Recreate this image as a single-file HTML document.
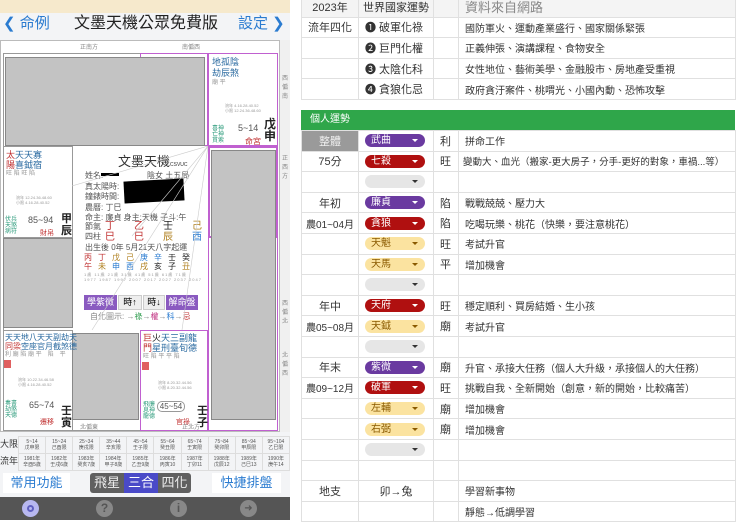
<!DOCTYPE html>
<html><head><meta charset="utf-8"><style>
*{margin:0;padding:0;box-sizing:border-box}
body{width:739px;height:520px;overflow:hidden;background:#fff;font-family:"Liberation Sans","Noto Sans CJK TC",sans-serif;position:relative}
.a{position:absolute}
.g{position:absolute;background:#c3c3c3;border:1px solid #888}
.t{font-size:8px;line-height:9px;position:absolute}
table{border-collapse:collapse;position:absolute;table-layout:fixed}
.rt td{border:1px solid #e0e0e0;font-size:11px;color:#333;height:20.6px;padding:0 6px;white-space:nowrap;overflow:hidden}
.pill{display:inline-block;width:60px;height:13px;border-radius:7px;font-size:10px;line-height:13px;padding-left:6px;position:relative;vertical-align:middle}
.pill:after{content:"";position:absolute;right:7px;top:5px;border:3px solid transparent;border-top:3px solid currentColor}
.pu{background:#6a3aa0;color:#fff}.rd{background:#b01010;color:#fff}.ye{background:#fbe3a0;color:#8a5a00}.em{background:#e6e6e6;color:#333}
#bt td{border:1px solid #ddd;font-size:5px;line-height:6px;text-align:center;color:#555;height:17px;overflow:hidden;white-space:nowrap;padding:0}
</style></head><body>
<div class="a" style="left:0;top:0;width:290px;height:520px;background:#f3f4f6"></div>
<div class="a" style="left:0;top:0;width:290px;height:13px;background:#f6e9cc"></div>
<div class="a" style="left:3px;top:13px;font-size:15px;color:#2a7bd0;line-height:22px">❮ 命例</div>
<div class="a" style="left:74px;top:12px;font-size:16px;color:#222;line-height:24px">文墨天機公眾免費版</div>
<div class="a" style="left:238px;top:13px;font-size:15px;color:#2a7bd0;line-height:22px">設定 ❯</div>
<div class="a" style="left:0;top:40px;width:280px;height:392px;background:#fff;border:1px solid #bbb"></div>
<div class="a" style="left:280px;top:40px;width:10px;height:392px;background:#f0f0f0"></div>
<div class="t" style="left:80px;top:44px;color:#888;font-size:6px">正南方</div>
<div class="t" style="left:182px;top:44px;color:#888;font-size:6px">南偏西</div>
<div class="t" style="left:282px;top:75px;color:#888;font-size:6px;width:6px">西偏南</div>
<div class="t" style="left:282px;top:155px;color:#888;font-size:6px;width:6px">正西方</div>
<div class="t" style="left:282px;top:300px;color:#888;font-size:6px;width:6px">西偏北</div>
<div class="t" style="left:282px;top:352px;color:#888;font-size:6px;width:6px">北偏西</div>
<div class="a" style="left:3px;top:53px;width:275px;height:378px;border:1px solid #999"></div>
<div class="a" style="left:140px;top:53px;width:68px;height:93px;border:1px solid #c060d0"></div>
<div class="a" style="left:208px;top:53px;width:70px;height:93px;border:1px solid #c060d0;background:#fff"></div>
<div class="a" style="left:208px;top:146px;width:70px;height:92px;border:2px solid #c060d0"></div>
<div class="a" style="left:208px;top:146px;width:70px;height:285px;border:1px solid #c060d0"></div>
<div class="a" style="left:140px;top:330px;width:68px;height:101px;border:1px solid #c060d0"></div>
<div class="a" style="left:3px;top:146px;width:70px;height:92px;border:1px solid #999"></div>
<div class="a" style="left:3px;top:330px;width:70px;height:101px;border:1px solid #999"></div>
<div class="g" style="left:5px;top:57px;width:200px;height:89px"></div>
<div class="g" style="left:211px;top:150px;width:65px;height:270px"></div>
<div class="g" style="left:3px;top:238px;width:70px;height:90px"></div>
<div class="g" style="left:72px;top:333px;width:67px;height:87px"></div>
<div class="t" style="left:212px;top:57px;color:#2a6aa0;font-size:9px;line-height:11px">地孤陰<br>劫辰煞</div>
<div class="t" style="left:212px;top:79px;color:#999;font-size:6px">廟 平</div>
<div class="t" style="left:225px;top:103px;color:#999;font-size:4px;line-height:5px">流年 4.16.28.40.52<br>小限 12.24.36.48.60</div>
<div class="t" style="left:212px;top:126px;color:#2a9a7a;font-size:6px;line-height:6px">喜神<br>亡神<br>貫索</div>
<div class="t" style="left:238px;top:124px;color:#555;font-size:9px">5~14</div>
<div class="t" style="left:264px;top:118px;font-size:12px;line-height:12px;color:#222;font-weight:bold">戊<br>申</div>
<div class="t" style="left:245px;top:137px;color:#c03030;font-size:8px">命宮</div>
<div class="t" style="left:6px;top:150px;font-size:9px;line-height:10px"><span style="color:#c03030">太</span><span style="color:#2a6aa0">天天寡</span><br><span style="color:#c03030">陽</span><span style="color:#2a6aa0">喜鉞宿</span></div>
<div class="t" style="left:6px;top:170px;color:#999;font-size:6px">旺 陷 旺 陷</div>
<div class="t" style="left:16px;top:195px;color:#999;font-size:4px;line-height:5px">流年 12.24.36.48.60<br>小限 4.16.28.40.52</div>
<div class="t" style="left:5px;top:217px;color:#2a9a7a;font-size:6px;line-height:6px">伏兵<br>天煞<br>病符</div>
<div class="t" style="left:28px;top:216px;color:#555;font-size:9px">85~94</div>
<div class="t" style="left:61px;top:213px;font-size:11px;line-height:12px;font-weight:bold;color:#222">甲<br>辰</div>
<div class="t" style="left:40px;top:229px;color:#c03030;font-size:7px">財帛</div>
<div class="t" style="left:118px;top:154px;font-size:13px;line-height:15px;color:#333">文墨天機<span style="font-size:5px">CSVUC</span></div>
<div class="t" style="left:85px;top:171px;color:#555;font-size:8px;line-height:10.5px">姓名:<br>真太陽時:<br>鐘錶時間:<br>農曆: 丁巳<br>命主: 廉貞 身主:天機 子斗:午</div>
<div class="t" style="left:147px;top:171px;color:#555;font-size:8px">陰女 土五局</div>
<div class="a" style="left:124px;top:180px;width:60px;height:22px;background:#000;transform:rotate(-3deg)"></div>
<div class="a" style="left:101px;top:173px;width:18px;height:3px;background:#000"></div>
<div class="t" style="left:85px;top:222px;color:#555;font-size:8px;line-height:10px">節氣<br>四柱</div>
<div class="t" style="left:105px;top:221px;font-size:10px;line-height:11px;color:#c03030;letter-spacing:19px">丁乙<span style="color:#222">壬</span><span style="color:#b08020">己</span><br>巳巳<span style="color:#b08020">辰</span><span style="color:#2a7bd0">酉</span></div>
<div class="t" style="left:85px;top:243px;color:#555;font-size:8px">出生後 0年 5月21天八字起運</div>
<div class="t" style="left:84px;top:253px;font-size:8px;line-height:9px;letter-spacing:6px"><span style="color:#c03030">丙丁</span><span style="color:#b08020">戊己</span><span style="color:#2a7bd0">庚辛</span><span style="color:#222">壬</span><span style="color:#222">癸</span><br><span style="color:#c03030">午</span><span style="color:#b08020">未</span><span style="color:#2a7bd0">申酉</span><span style="color:#b08020">戌</span><span style="color:#222">亥子</span><span style="color:#b08020">丑</span></div>
<div class="t" style="left:84px;top:272px;color:#999;font-size:4px;line-height:5px;letter-spacing:1px">1歲 11歲 21歲 31歲 41歲 51歲 61歲 71歲<br>1977 1987 1997 2007 2017 2027 2037 2047</div>
<div class="a" style="left:84px;top:295px;width:33px;height:15px;background:#8a5ac0;color:#fff;font-size:9px;line-height:15px;text-align:center">學紫微</div>
<div class="a" style="left:118px;top:295px;width:24px;height:15px;background:#eee;border:1px solid #ccc;font-size:9px;line-height:13px;text-align:center">時↑</div>
<div class="a" style="left:143px;top:295px;width:22px;height:15px;background:#eee;border:1px solid #ccc;font-size:9px;line-height:13px;text-align:center">時↓</div>
<div class="a" style="left:166px;top:295px;width:32px;height:15px;background:#8a5ac0;color:#fff;font-size:9px;line-height:15px;text-align:center">解命盤</div>
<div class="t" style="left:90px;top:312px;color:#888;font-size:8px">自化圖示: →<span style="color:#2a9a4a">祿</span>→<span style="color:#c03080">權</span>→<span style="color:#2a7bd0">科</span>→<span style="color:#c03030">忌</span></div>
<svg class="a" style="left:72px;top:146px" width="136" height="184"><g stroke="#ccc" stroke-width="0.6" fill="none"><line x1="136" y1="0" x2="0" y2="40"/><line x1="136" y1="0" x2="20" y2="184"/><line x1="136" y1="0" x2="110" y2="184"/><line x1="136" y1="0" x2="60" y2="90"/></g></svg>
<div class="t" style="left:5px;top:333px;font-size:8px;line-height:9px"><span style="color:#2a6aa0">天天地八天天副劫天</span><br><span style="color:#c03030">同梁</span><span style="color:#2a6aa0">空座官月截煞德</span></div>
<div class="t" style="left:5px;top:351px;color:#999;font-size:6px">利 廟 陷 廟 平　陷　平</div>
<div class="a" style="left:4px;top:360px;width:7px;height:8px;background:#e06060"></div>
<div class="t" style="left:18px;top:377px;color:#999;font-size:4px;line-height:5px">流年 10.22.34.46.58<br>小限 4.16.28.40.52</div>
<div class="t" style="left:5px;top:401px;color:#2a9a7a;font-size:6px;line-height:6px">奏書<br>劫煞<br>天德</div>
<div class="t" style="left:29px;top:401px;color:#555;font-size:9px">65~74</div>
<div class="t" style="left:61px;top:405px;font-size:11px;line-height:12px;font-weight:bold;color:#222">壬<br>寅</div>
<div class="t" style="left:40px;top:418px;color:#c03030;font-size:7px">遷移</div>
<div class="t" style="left:143px;top:333px;font-size:9px;line-height:10px"><span style="color:#c03030">巨</span><span style="color:#222">火</span><span style="color:#2a6aa0">天三副龍</span><br><span style="color:#c03030">門</span><span style="color:#2a6aa0">星刑臺旬德</span></div>
<div class="t" style="left:143px;top:353px;color:#999;font-size:6px">旺 陷 平 平 陷</div>
<div class="a" style="left:142px;top:362px;width:7px;height:8px;background:#e06060"></div>
<div class="t" style="left:158px;top:380px;color:#999;font-size:4px;line-height:5px">流年 8.20.32.44.56<br>小限 8.20.32.44.56</div>
<div class="t" style="left:143px;top:402px;color:#2a9a7a;font-size:6px;line-height:6px">飛廉<br>息神<br>龍德</div>
<div class="a" style="left:157px;top:401px;width:28px;height:11px;border:1px solid #999;border-radius:5px;font-size:8px;line-height:9px;text-align:center;color:#555">45~54</div>
<div class="t" style="left:197px;top:405px;font-size:11px;line-height:12px;font-weight:bold;color:#222">壬<br>子</div>
<div class="t" style="left:176px;top:418px;color:#c03030;font-size:7px">官祿</div>
<div class="t" style="left:80px;top:424px;color:#888;font-size:6px">北偏東</div>
<div class="t" style="left:182px;top:424px;color:#888;font-size:6px">正北方</div>
<div class="a" style="left:0;top:436px;width:18px;height:17px;font-size:9px;line-height:17px;color:#333;white-space:nowrap;overflow:hidden">大限</div>
<div class="a" style="left:0;top:453px;width:18px;height:17px;font-size:9px;line-height:17px;color:#333;white-space:nowrap;overflow:hidden">流年</div>
<table id="bt" style="left:18px;top:436px;width:272px"><tr><td>5~14<br>戊申限</td><td>15~24<br>己酉限</td><td>25~34<br>庚戌限</td><td>35~44<br>辛亥限</td><td>45~54<br>壬子限</td><td>55~64<br>癸丑限</td><td>65~74<br>壬寅限</td><td>75~84<br>癸卯限</td><td>85~94<br>甲辰限</td><td>95~104<br>乙巳限</td></tr><tr><td>1981年<br>辛酉5歲</td><td>1982年<br>壬戌6歲</td><td>1983年<br>癸亥7歲</td><td>1984年<br>甲子8歲</td><td>1985年<br>乙丑9歲</td><td>1986年<br>丙寅10</td><td>1987年<br>丁卯11</td><td>1988年<br>戊辰12</td><td>1989年<br>己巳13</td><td>1990年<br>庚午14</td></tr></table>
<div class="a" style="left:3px;top:473px;width:67px;height:20px;background:#fff;color:#2a7bd0;font-size:13px;line-height:20px;text-align:center">常用功能</div>
<div class="a" style="left:90px;top:473px;width:101px;height:20px;background:#606060;border-radius:3px"></div>
<div class="a" style="left:90px;top:473px;width:34px;height:20px;color:#eee;font-size:13px;line-height:20px;text-align:center">飛星</div>
<div class="a" style="left:124px;top:473px;width:34px;height:20px;background:#4a4ac8;color:#fff;font-size:13px;line-height:20px;text-align:center">三合</div>
<div class="a" style="left:158px;top:473px;width:33px;height:20px;color:#eee;font-size:13px;line-height:20px;text-align:center">四化</div>
<div class="a" style="left:212px;top:473px;width:69px;height:20px;background:#fff;color:#2a7bd0;font-size:13px;line-height:20px;text-align:center">快捷排盤</div>
<div class="a" style="left:0;top:497px;width:290px;height:23px;background:#555"></div>
<div class="a" style="left:22px;top:500px;width:17px;height:17px;border-radius:50%;background:#b8b8f0"></div>
<div class="a" style="left:27px;top:505px;width:7px;height:7px;border-radius:50%;border:2px solid #6060c0"></div>
<div class="a" style="left:96px;top:500px;width:17px;height:17px;border-radius:50%;background:#888;color:#555;font-size:12px;line-height:17px;text-align:center;font-weight:bold">?</div>
<div class="a" style="left:170px;top:500px;width:17px;height:17px;border-radius:50%;background:#888;color:#555;font-size:12px;line-height:17px;text-align:center;font-weight:bold">i</div>
<div class="a" style="left:240px;top:500px;width:17px;height:17px;border-radius:50%;background:#888;color:#555;font-size:10px;line-height:17px;text-align:center">➜</div>
<table class="rt" style="left:301px;top:-4px;width:434px">
<colgroup><col style="width:57px"><col style="width:75px"><col style="width:25px"><col style="width:277px"></colgroup>
<tr style="background:#f4f4f4"><td style="text-align:center">2023年</td><td style="padding:0 4px">世界國家運勢</td><td></td><td style="font-size:13px;color:#888">資料來自網路</td></tr>
<tr><td style="text-align:center;padding:0">流年四化</td><td>❶ 破軍化祿</td><td></td><td style="font-size:10px">國防軍火、運動產業盛行、國家關係緊張</td></tr>
<tr><td></td><td>❷ 巨門化權</td><td></td><td style="font-size:10px">正義伸張、演講課程、食物安全</td></tr>
<tr><td></td><td>❸ 太陰化科</td><td></td><td style="font-size:10px">女性地位、藝術美學、金融股市、房地產受重視</td></tr>
<tr><td></td><td>❹ 貪狼化忌</td><td></td><td style="font-size:10px">政府貪汙案件、桃喟光、小國內動、恐怖攻擊</td></tr>
</table>
<div class="a" style="left:301px;top:110px;width:434px;height:20px;background:#2fa64a;color:#fff;font-size:10px;line-height:20px;padding-left:9px">個人運勢</div>
<table class="rt" style="left:301px;top:130px;width:434px">
<colgroup><col style="width:57px"><col style="width:75px"><col style="width:25px"><col style="width:277px"></colgroup>
<tr><td style="background:#9a9a9a;color:#eee;text-align:center">整體</td><td><span class="pill pu">武曲</span></td><td>利</td><td style="font-size:10px">拼命工作</td></tr>
<tr><td style="text-align:center">75分</td><td><span class="pill rd">七殺</span></td><td>旺</td><td style="font-size:9.5px;padding:0 4px">變動大、血光（搬家-更大房子，分手-更好的對象，車禍...等）</td></tr>
<tr><td></td><td><span class="pill em"></span></td><td></td><td></td></tr>
<tr><td style="text-align:center">年初</td><td><span class="pill pu">廉貞</span></td><td>陷</td><td style="font-size:10px">戰戰兢兢、壓力大</td></tr>
<tr><td style="text-align:center;padding:0;font-size:10px">農01~04月</td><td><span class="pill rd">貪狼</span></td><td>陷</td><td style="font-size:10px">吃喝玩樂、桃花（快樂，要注意桃花）</td></tr>
<tr><td></td><td><span class="pill ye">天魁</span></td><td>旺</td><td style="font-size:10px">考試升官</td></tr>
<tr><td></td><td><span class="pill ye">天馬</span></td><td>平</td><td style="font-size:10px">增加機會</td></tr>
<tr><td></td><td><span class="pill em"></span></td><td></td><td></td></tr>
<tr><td style="text-align:center">年中</td><td><span class="pill rd">天府</span></td><td>旺</td><td style="font-size:10px">穩定順利、買房結婚、生小孩</td></tr>
<tr><td style="text-align:center;padding:0;font-size:10px">農05~08月</td><td><span class="pill ye">天鉞</span></td><td>廟</td><td style="font-size:10px">考試升官</td></tr>
<tr><td></td><td><span class="pill em"></span></td><td></td><td></td></tr>
<tr><td style="text-align:center">年末</td><td><span class="pill pu">紫微</span></td><td>廟</td><td style="font-size:10px">升官、承接大任務（個人大升級，承接個人的大任務）</td></tr>
<tr><td style="text-align:center;padding:0;font-size:10px">農09~12月</td><td><span class="pill rd">破軍</span></td><td>旺</td><td style="font-size:10px">挑戰自我、全新開始（創意，新的開始，比較痛苦）</td></tr>
<tr><td></td><td><span class="pill ye">左輔</span></td><td>廟</td><td style="font-size:10px">增加機會</td></tr>
<tr><td></td><td><span class="pill ye">右弼</span></td><td>廟</td><td style="font-size:10px">增加機會</td></tr>
<tr><td></td><td><span class="pill em"></span></td><td></td><td></td></tr>
<tr><td></td><td></td><td></td><td></td></tr>
<tr><td style="text-align:center">地支</td><td style="text-align:center">卯→兔</td><td></td><td style="font-size:10px">學習新事物</td></tr>
<tr><td></td><td></td><td></td><td style="font-size:10px">靜態→低調學習</td></tr>
</table>
</body></html>
